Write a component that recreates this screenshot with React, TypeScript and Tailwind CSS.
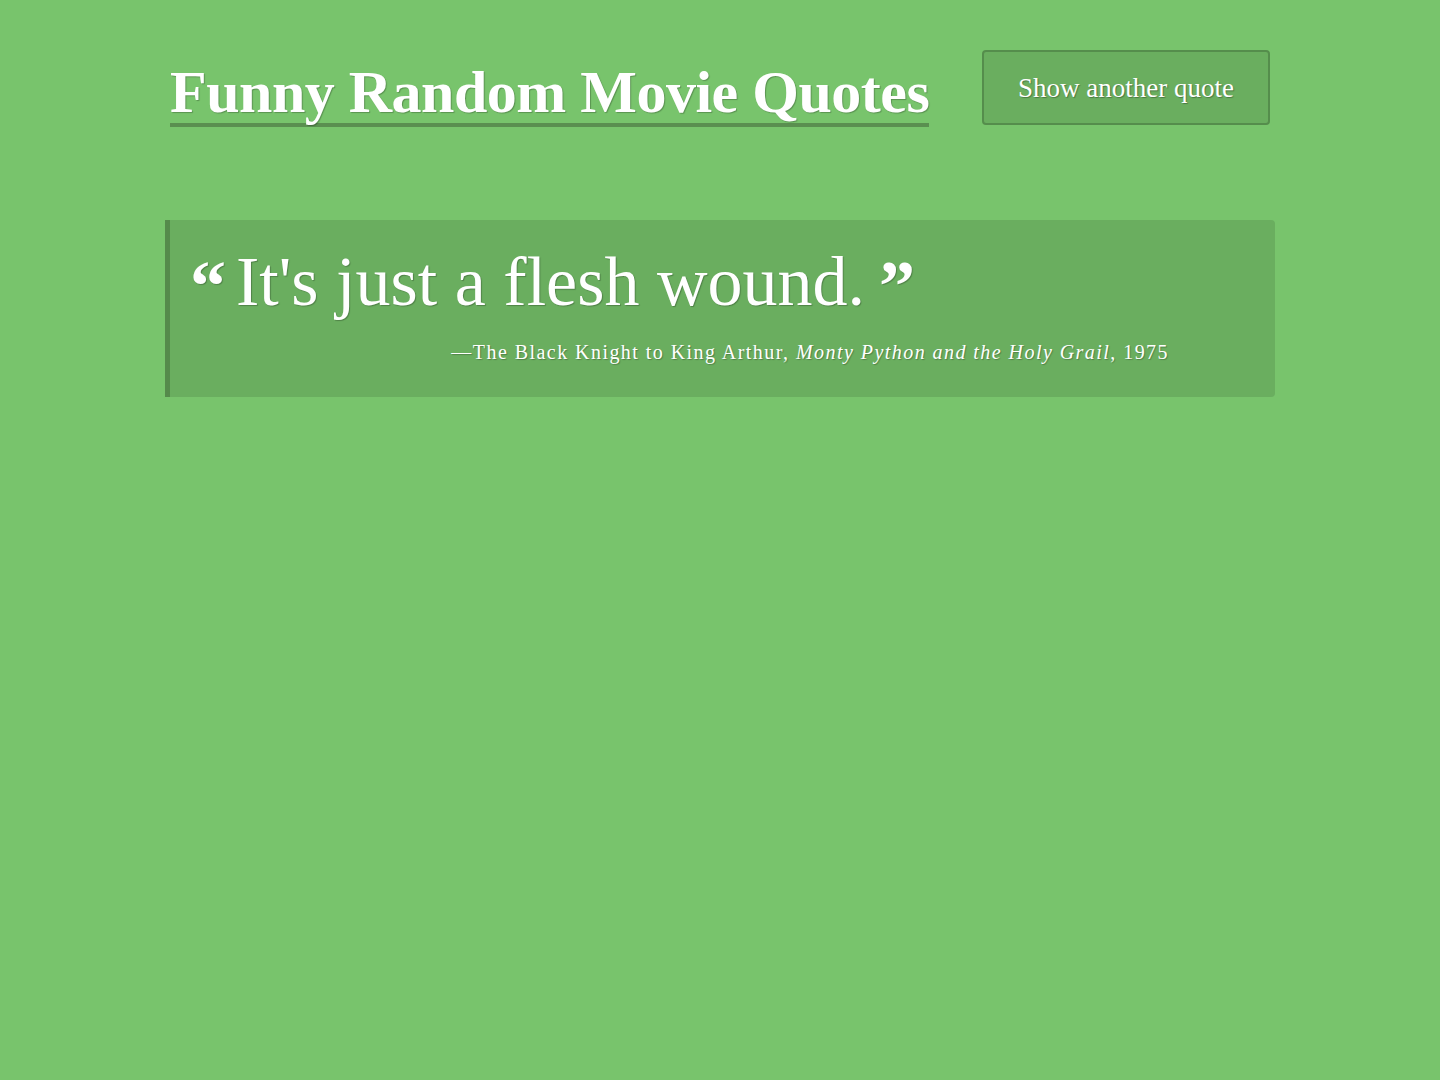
const serif = { fontFamily: '"Liberation Serif", "DejaVu Serif", serif' }

export default function App() {
  return (
    <div className="min-h-[1080px] bg-[#78c46c] text-white" style={serif}>
      <div className="mx-auto w-[1110px] pt-[50px]">
        {/* Header */}
        <header className="flex items-start justify-between px-[5px]">
          <h1 className="mt-[11px] whitespace-nowrap border-b-4 border-[#5a8f50] text-[60px] font-bold leading-[62px] tracking-[-0.5px] [text-shadow:1px_1px_1px_rgba(0,0,0,0.25)]">
            Funny Random Movie Quotes
          </h1>
          <button className="h-[75px] w-[288px] rounded border-2 border-[#558d4c] bg-[#6aae5f] pt-[2px] text-[27px] [text-shadow:1px_1px_1px_rgba(0,0,0,0.3)]">
            Show another quote
          </button>
        </header>

        {/* Quote */}
        <blockquote className="mt-[93px] h-[177px] rounded-r border-l-[5px] border-[#558a4b] bg-[#6aae5f] pl-[20px] pt-[25px] [text-shadow:1px_1px_1px_rgba(0,0,0,0.25)]">
          <p className="flex items-baseline whitespace-nowrap text-[70px] leading-[72px]">
            <span className="mr-[10px] translate-y-[5px] text-[72px] font-bold">&ldquo;</span>
            It's just a flesh wound.
            <span className="ml-[14px] translate-y-[5px] text-[72px] font-bold">&rdquo;</span>
          </p>
          <p className="mt-[20px] pr-[106px] text-right text-[20px] leading-[28px] tracking-[1.45px]">
            &mdash;The Black Knight to King Arthur, <em>Monty Python and the Holy Grail</em>, 1975
          </p>
        </blockquote>
      </div>
    </div>
  )
}
